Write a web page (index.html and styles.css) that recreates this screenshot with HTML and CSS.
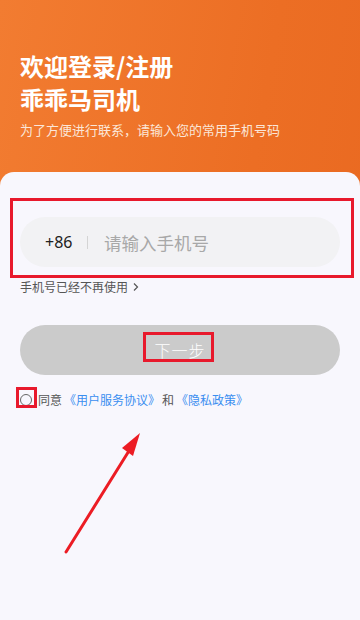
FILE: index.html
```html
<!DOCTYPE html>
<html lang="zh">
<head>
<meta charset="utf-8">
<title>欢迎登录/注册</title>
<link rel="stylesheet" href="styles.css">
</head>
<body>
<header class="hero">
  <h1 class="hero-title">欢迎登录/注册<br>乖乖马司机</h1>
  <p class="hero-sub">为了方便进行联系，请输入您的常用手机号码</p>
</header>
<main class="card">
  <div class="phone-field">
    <span class="prefix">+86</span>
    <span class="divider"></span>
    <span class="placeholder">请输入手机号</span>
  </div>
  <div class="lost-link">手机号已经不再使用<svg class="chev" width="8" height="10" viewBox="0 0 8 10"><path d="M2 1.5 L5.5 5 L2 8.5" fill="none" stroke="#555" stroke-width="1.2"/></svg></div>
  <button class="next-btn">下一步</button>
  <div class="agree">
    <span class="radio"></span>
    <span class="agree-text">同意</span>
    <span class="link">《用户服务协议》</span>
    <span class="agree-text">和</span>
    <span class="link">《隐私政策》</span>
  </div>
</main>
<div class="mark mark-input"></div>
<div class="mark mark-btn"></div>
<div class="mark mark-radio"></div>
<svg class="arrow" width="360" height="620" viewBox="0 0 360 620">
  <line x1="66" y1="552" x2="132" y2="446" stroke="#ec1c24" stroke-width="3" stroke-linecap="round"/>
  <polygon points="140,433 122,448 133,456" fill="#ec1c24"/>
</svg>
</body>
</html>
```

FILE: styles.css
```css
* { box-sizing: border-box; }
html, body { margin: 0; padding: 0; }
body {
  width: 360px;
  height: 620px;
  overflow: hidden;
  position: relative;
  font-family: "Noto Sans CJK SC", "Noto Sans", sans-serif;
  background: linear-gradient(100deg, #f27c31 0%, #ec6e24 60%, #e96820 100%);
  display: flex;
  flex-direction: column;
}
.hero {
  height: 172px;
  padding: 49px 20px 0;
  color: #fff;
}
.hero-title {
  margin: 0;
  font-size: 24px;
  line-height: 33px;
  font-weight: 700;
}
.hero-sub {
  margin: 6px 0 0;
  font-size: 13px;
  line-height: 18px;
  color: #fbe6d8;
}
.card {
  flex: 1;
  background: #f8f7fd;
  border-radius: 14px 14px 0 0;
  padding: 45px 20px 0;
  display: flex;
  flex-direction: column;
}
.phone-field {
  height: 50px;
  border-radius: 25px;
  background: #f2f2f4;
  display: flex;
  align-items: center;
  padding-left: 25px;
}
.prefix {
  font-family: "Noto Sans", sans-serif;
  font-size: 16px;
  color: #222;
  width: 42px;
}
.divider {
  width: 1px;
  height: 13px;
  background: #d4d4d4;
}
.placeholder {
  margin-left: 16px;
  font-size: 17.5px;
  color: #a8a8a8;
}
.lost-link {
  margin-top: 12px;
  font-size: 12px;
  line-height: 16px;
  color: #555;
  display: flex;
  align-items: center;
  gap: 4px;
}
.next-btn {
  margin-top: 30px;
  height: 50px;
  border: none;
  border-radius: 25px;
  background: #cbcbcb;
  color: #fff;
  font-family: "Noto Sans CJK SC", sans-serif;
  font-size: 16px;
  font-weight: 300;
  letter-spacing: 1px;
}
.agree {
  margin-top: 17px;
  display: flex;
  align-items: center;
  font-size: 12px;
  line-height: 16px;
}
.radio {
  width: 12px;
  height: 12px;
  border: 1.3px solid #666;
  border-radius: 50%;
  margin-right: 6px;
}
.agree-text { color: #555; }
.link { color: #3a8ef0; margin: 0 2px; }
.mark {
  position: absolute;
  border: 3px solid #e8192c;
}
.mark-input { left: 10px; top: 198px; width: 344px; height: 80px; }
.mark-btn { left: 143px; top: 332px; width: 71px; height: 30px; }
.mark-radio { left: 16px; top: 387px; width: 21px; height: 21px; }
.arrow {
  position: absolute;
  left: 0;
  top: 0;
  pointer-events: none;
}
```
